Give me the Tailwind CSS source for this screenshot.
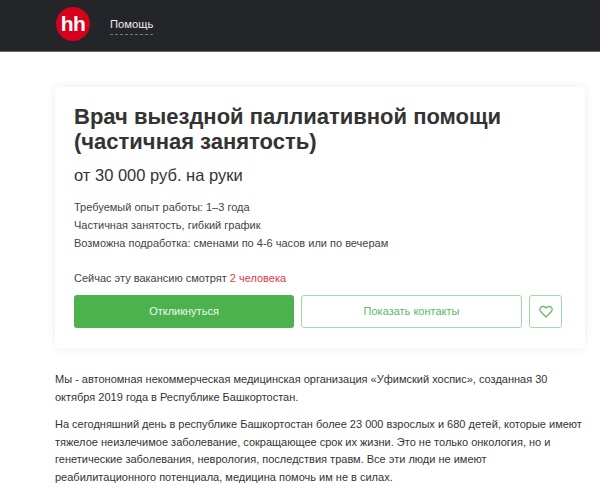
<!doctype html>
<html lang="ru">
<head>
<meta charset="utf-8">
<script src="https://cdn.jsdelivr.net/npm/@tailwindcss/browser@4"></script>
</head>
<body class="bg-white font-['Liberation_Sans',Arial,sans-serif] text-[#333] overflow-hidden w-[600px] h-[487px]">
<header class="h-[52px] bg-[#232529] border-b border-[#666] flex items-start pl-[56px]">
  <div class="mt-[7px] w-[34px] h-[34px] rounded-full bg-[#d6001c] flex items-center justify-center text-white font-bold text-[21px] leading-none tracking-[-0.5px] pb-[2px]">hh</div>
  <div class="ml-[20px] mt-[16px] h-[19px] border-b border-dashed border-[#777] text-[#eee] text-[11.2px] leading-[16px]">Помощь</div>
</header>
<main class="pl-[55px] pr-[15px]">
  <section class="mt-[35px] w-[530px] h-[261px] bg-white rounded-[3px] shadow-[0_0_12px_rgba(0,0,0,0.07)] pl-[19px] pr-[23px] pt-[17px]">
    <h1 class="font-bold text-[22px] leading-[25px] text-[#333]">Врач выездной паллиативной помощи<br>(частичная занятость)</h1>
    <p class="mt-[9px] text-[16.5px] leading-[24px]">от 30 000 руб. на руки</p>
    <ul class="mt-[11px] text-[11px] leading-[18px] text-[#444]">
      <li>Требуемый опыт работы: 1–3 года</li>
      <li>Частичная занятость, гибкий график</li>
      <li>Возможна подработка: сменами по 4-6 часов или по вечерам</li>
    </ul>
    <p class="mt-[17px] text-[11px] leading-[18px] text-[#444]">Сейчас эту вакансию смотрят <span class="text-[#e5393f]">2 человека</span></p>
    <div class="mt-[8px] flex gap-[7px]">
      <button class="w-[220px] h-[33px] bg-[#4bb24e] text-white/90 rounded-[3px] text-[11px]">Откликнуться</button>
      <button class="w-[221px] h-[33px] border border-[#a3d9a5] text-[#5cb85f] rounded-[3px] text-[11px]">Показать контакты</button>
      <button class="w-[33px] h-[33px] border border-[#a3d9a5] rounded-[3px] flex items-center justify-center">
        <svg width="14" height="13" viewBox="0 0 14 13" fill="none" stroke="#5cb85f" stroke-width="1.2"><path d="M7 12 1.8 6.8a3 3 0 0 1 0-4.5 3.2 3.2 0 0 1 4.4 0L7 3.1l.8-.8a3.2 3.2 0 0 1 4.4 0 3 3 0 0 1 0 4.5Z"/></svg>
      </button>
    </div>
  </section>
</main>
<article class="mt-[23px] ml-[55px] w-[530px] text-[11px] leading-[17.6px] text-[#333]">
  <p>Мы - автономная некоммерческая медицинская организация «Уфимский хоспис», созданная 30<br>октября 2019 года в Республике Башкортостан.</p>
  <p class="mt-[10px]">На сегодняшний день в республике Башкортостан более 23 000 взрослых и 680 детей, которые имеют<br>тяжелое неизлечимое заболевание, сокращающее срок их жизни. Это не только онкология, но и<br>генетические заболевания, неврология, последствия травм. Все эти люди не имеют<br>реабилитационного потенциала, медицина помочь им не в силах.</p>
</article>
</body>
</html>
